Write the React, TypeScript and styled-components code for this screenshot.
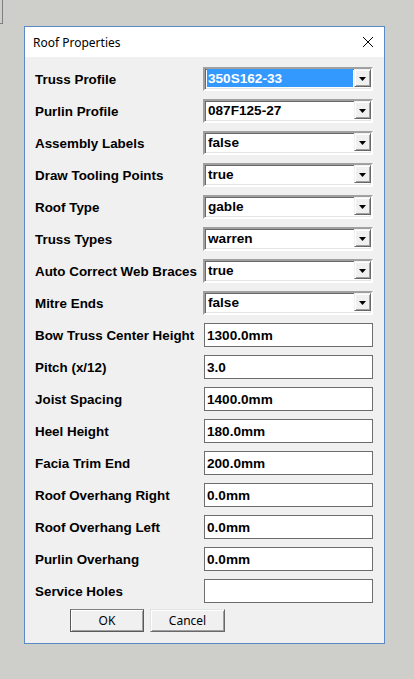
import React from "react";
import styled, { createGlobalStyle } from "styled-components";

const GlobalStyle = createGlobalStyle`
  html, body {
    margin: 0;
    padding: 0;
    background: #cececa;
  }
  body {
    font-family: "Liberation Sans", Arial, sans-serif;
  }
`;

const Desktop = styled.div`
  width: 414px;
  height: 679px;
  display: flex;
  flex-direction: column;
  align-items: flex-start;
  background: #cececa;
  overflow: hidden;
`;

/* edge of another window peeking in at the top-left corner */
const WindowEdge = styled.div`
  width: 2px;
  height: 23px;
  border-right: 1px solid #808080;
  border-bottom: 1px solid #808080;
`;

const Dialog = styled.div`
  margin: 2px 0 0 24px;
  width: 359px;
  border: 1px solid #5a8ac6;
  background: #f0f0f0;
  display: flex;
  flex-direction: column;
`;

const TitleBar = styled.div`
  height: 30px;
  background: #ffffff;
  display: flex;
  align-items: center;
  justify-content: space-between;
  padding: 0 10px 0 8px;
`;

const Title = styled.span`
  font-family: "Noto Sans", "Open Sans", sans-serif;
  font-size: 12px;
  color: #000;
`;

const CloseButton = styled.svg`
  width: 12px;
  height: 12px;
  display: block;
`;

const Body = styled.div`
  padding: 10px 11px 11px 10px;
  display: flex;
  flex-direction: column;
`;

const Form = styled.div`
  display: grid;
  grid-template-columns: 168px 170px;
  grid-auto-rows: 24px;
  row-gap: 8px;
`;

const Label = styled.div`
  display: flex;
  align-items: center;
  font-size: 13.4px;
  font-weight: bold;
  color: #000;
  white-space: nowrap;
`;

const Combo = styled.div`
  height: 24px;
  box-sizing: border-box;
  border-style: solid;
  border-width: 2px;
  border-color: #a0a0a0 #ffffff #ffffff #a0a0a0;
  box-shadow: inset 1px 1px 0 #696969, inset -1px -1px 0 #e3e3e3;
  background: #ffffff;
  display: flex;
  padding: 0 0 2px 2px;
  gap: 1px;
`;

const ComboText = styled.div<{ $selected?: boolean }>`
  flex: 1;
  display: flex;
  align-items: center;
  padding-left: 1px;
  font-size: 13.6px;
  font-weight: bold;
  color: ${(p) => (p.$selected ? "#ffffff" : "#000000")};
  background: ${(p) => (p.$selected ? "#3399ff" : "transparent")};
`;

const DropButton = styled.div`
  width: 17px;
  box-sizing: border-box;
  background: #f0f0f0;
  border-style: solid;
  border-width: 1px;
  border-color: #f0f0f0 #696969 #696969 #f0f0f0;
  box-shadow: inset 1px 1px 0 #ffffff, inset -1px -1px 0 #a0a0a0;
  display: flex;
  align-items: center;
  justify-content: center;
`;

const Arrow = styled.svg`
  width: 7px;
  height: 4px;
  display: block;
  margin-top: 1px;
`;

const TextField = styled.input`
  margin: 0 0 0 1px;
  width: 169px;
  height: 24px;
  box-sizing: border-box;
  border: 1px solid #6e6e6e;
  background: #ffffff;
  padding: 0 0 0 2px;
  font-family: "Liberation Sans", Arial, sans-serif;
  font-size: 13.6px;
  font-weight: bold;
  color: #000;
  outline: none;
`;

const ButtonRow = styled.div`
  margin: 6px 0 0 35px;
  display: flex;
  gap: 6px;
`;

const PushButton = styled.div<{ $default?: boolean; $width: number }>`
  width: ${(p) => p.$width}px;
  height: 23px;
  box-sizing: border-box;
  background: #f0f0f0;
  border: 1px solid;
  border-color: ${(p) =>
    p.$default ? "#808080 #5a5a5a #5a5a5a #5a5a5a" : "#e3e3e3 #696969 #696969 #e3e3e3"};
  box-shadow: inset 1px 1px 0 #ffffff, inset -1px -1px 0 #a0a0a0;
  display: flex;
  align-items: center;
  justify-content: center;
  font-family: "Noto Sans", "Open Sans", sans-serif;
  font-size: 12px;
  color: #000;
`;

type Field =
  | { label: string; kind: "combo"; value: string; selected?: boolean }
  | { label: string; kind: "text"; value: string };

const fields: Field[] = [
  { label: "Truss Profile", kind: "combo", value: "350S162-33", selected: true },
  { label: "Purlin Profile", kind: "combo", value: "087F125-27" },
  { label: "Assembly Labels", kind: "combo", value: "false" },
  { label: "Draw Tooling Points", kind: "combo", value: "true" },
  { label: "Roof Type", kind: "combo", value: "gable" },
  { label: "Truss Types", kind: "combo", value: "warren" },
  { label: "Auto Correct Web Braces", kind: "combo", value: "true" },
  { label: "Mitre Ends", kind: "combo", value: "false" },
  { label: "Bow Truss Center Height", kind: "text", value: "1300.0mm" },
  { label: "Pitch (x/12)", kind: "text", value: "3.0" },
  { label: "Joist Spacing", kind: "text", value: "1400.0mm" },
  { label: "Heel Height", kind: "text", value: "180.0mm" },
  { label: "Facia Trim End", kind: "text", value: "200.0mm" },
  { label: "Roof Overhang Right", kind: "text", value: "0.0mm" },
  { label: "Roof Overhang Left", kind: "text", value: "0.0mm" },
  { label: "Purlin Overhang", kind: "text", value: "0.0mm" },
  { label: "Service Holes", kind: "text", value: "" },
];

export default function App() {
  return (
    <>
      <GlobalStyle />
      <Desktop>
        <WindowEdge />
        <Dialog>
          <TitleBar>
            <Title>Roof Properties</Title>
            <CloseButton viewBox="0 0 12 12">
              <path d="M1 1 L11 11 M11 1 L1 11" stroke="#000" strokeWidth="1" fill="none" />
            </CloseButton>
          </TitleBar>
          <Body>
            <Form>
              {fields.map((f) => (
                <React.Fragment key={f.label}>
                  <Label>{f.label}</Label>
                  {f.kind === "combo" ? (
                    <Combo>
                      <ComboText $selected={f.selected}>{f.value}</ComboText>
                      <DropButton>
                        <Arrow viewBox="0 0 7 4">
                          <polygon points="0,0 7,0 3.5,4" fill="#000" />
                        </Arrow>
                      </DropButton>
                    </Combo>
                  ) : (
                    <TextField readOnly defaultValue={f.value} />
                  )}
                </React.Fragment>
              ))}
            </Form>
            <ButtonRow>
              <PushButton $default $width={74}>OK</PushButton>
              <PushButton $width={75}>Cancel</PushButton>
            </ButtonRow>
          </Body>
        </Dialog>
      </Desktop>
    </>
  );
}
